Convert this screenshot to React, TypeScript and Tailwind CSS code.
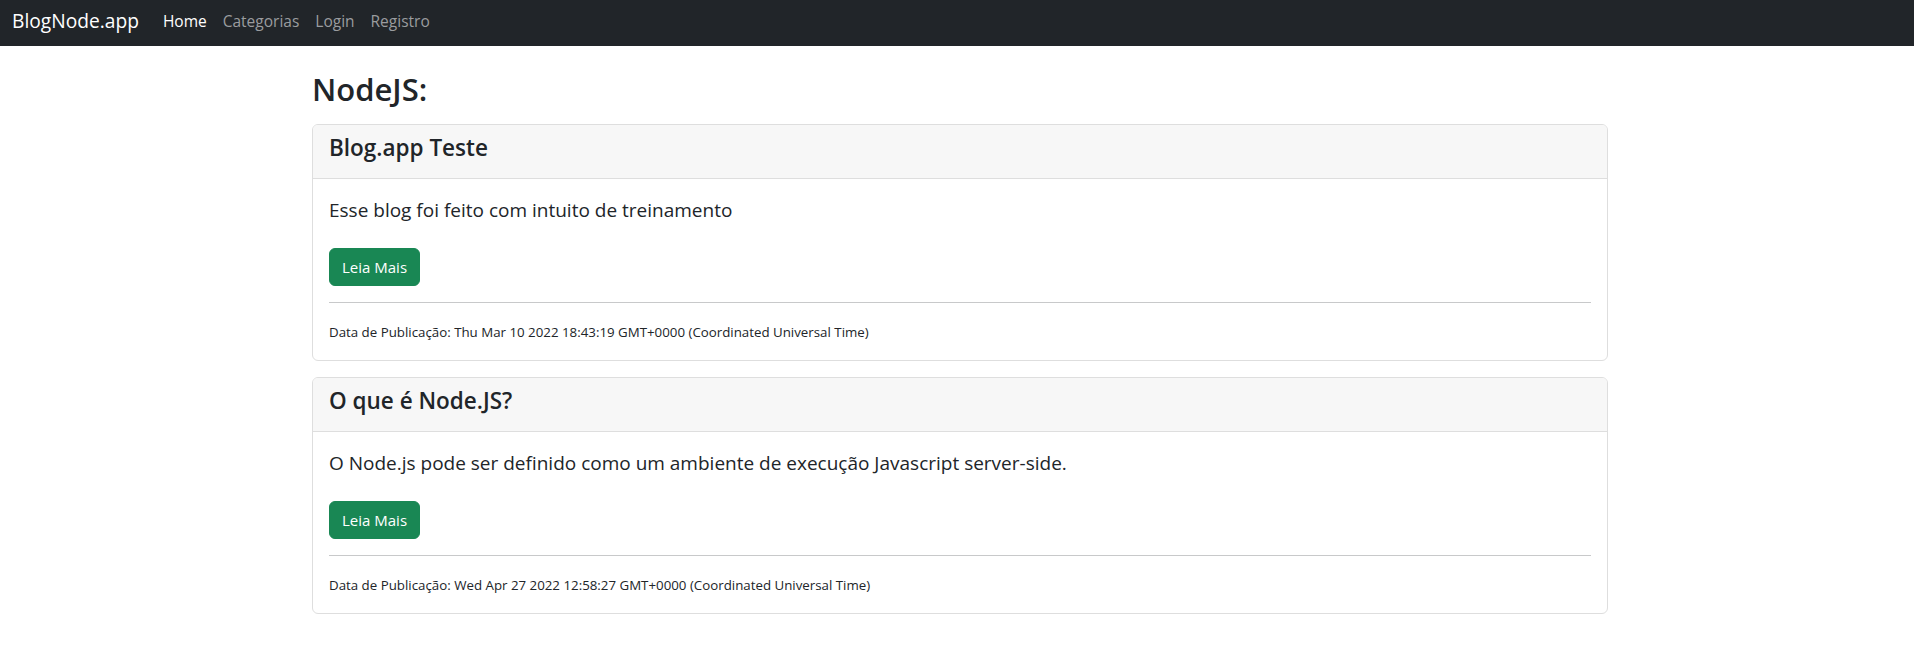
const POSTS = [
  {
    title: 'Blog.app Teste',
    description: 'Esse blog foi feito com intuito de treinamento',
    date: 'Thu Mar 10 2022 18:43:19 GMT+0000 (Coordinated Universal Time)',
  },
  {
    title: 'O que é Node.JS?',
    description: 'O Node.js pode ser definido como um ambiente de execução Javascript server-side.',
    date: 'Wed Apr 27 2022 12:58:27 GMT+0000 (Coordinated Universal Time)',
  },
]

const NAV = [
  { label: 'Home', active: true },
  { label: 'Categorias', active: false },
  { label: 'Login', active: false },
  { label: 'Registro', active: false },
]

export default function App() {
  return (
    <div className="min-h-screen bg-white text-[#212529] font-['Open_Sans',sans-serif]">
      {/* Navbar */}
      <nav className="h-[46px] bg-[#212529] flex items-start px-3 pt-[6px]">
        <a href="#" className="text-[19.2px] leading-[30px] text-white mr-4">
          BlogNode.app
        </a>
        <ul className="flex">
          {NAV.map(({ label, active }) => (
            <li key={label}>
              <a
                href="#"
                className={`block px-2 text-[15.5px] leading-[30px] ${active ? 'text-white' : 'text-[#9a9c9f]'}`}
              >
                {label}
              </a>
            </li>
          ))}
        </ul>
      </nav>

      <main className="w-[1320px] ml-[300px] px-3 pt-6">
        <h2 className="text-[31px] leading-[38px] font-semibold mb-4">NodeJS:</h2>

        <div className="flex flex-col gap-4">
          {POSTS.map((post) => (
            <div key={post.title} className="border border-[#dedede] rounded-[6px] overflow-hidden">
              <div className="bg-[#f7f7f7] border-b border-[#dedede] px-4 py-2">
                <h4 className="text-[22.5px] leading-[29px] font-semibold mb-2">{post.title}</h4>
              </div>
              <div className="p-4">
                <p className="text-[19px] leading-[30px] mb-[23px]">{post.description}</p>
                <button
                  type="button"
                  className="h-[38px] px-3 rounded-[6px] bg-[#198754] border border-[#198754] text-white text-[15px] leading-6"
                >
                  Leia Mais
                </button>
                <hr className="my-4 border-0 h-px bg-[#c8c9ca]" />
                <p className="text-[16px] leading-6">
                  <small className="text-[13.3px]">Data de Publicação: {post.date}</small>
                </p>
              </div>
            </div>
          ))}
        </div>
      </main>
    </div>
  )
}
